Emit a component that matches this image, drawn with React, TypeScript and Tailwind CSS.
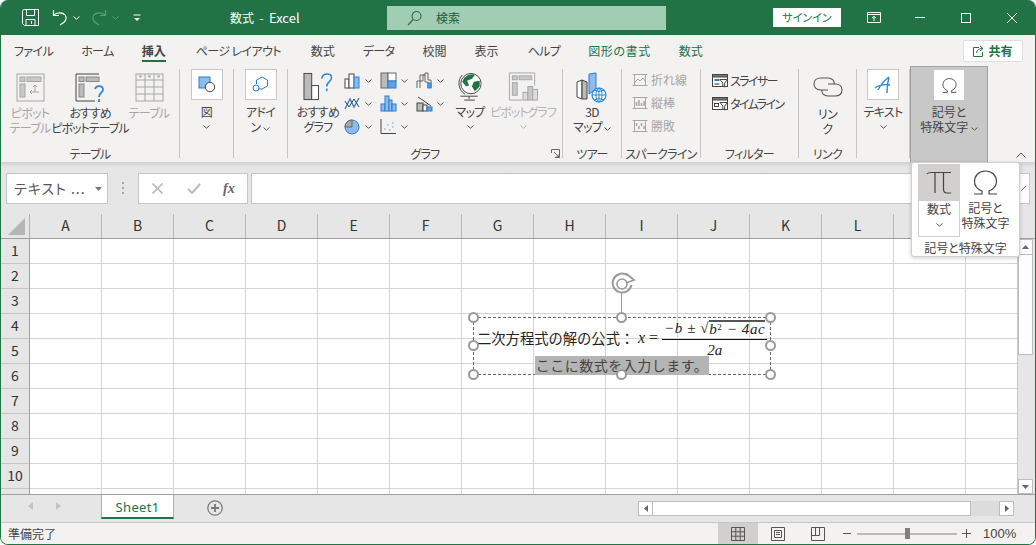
import type { ReactNode } from "react";

const columns = ["A", "B", "C", "D", "E", "F", "G", "H", "I", "J", "K", "L", "", " "];
const rows = [1, 2, 3, 4, 5, 6, 7, 8, 9, 10, 11];
const tabs = ["ファイル", "ホーム", "挿入", "ページ レイアウト", "数式", "データ", "校閲", "表示", "ヘルプ", "図形の書式", "数式"];

function Chevron({ color = "#555", className = "" }: { color?: string; className?: string }) {
  return (
    <svg width="7" height="4" viewBox="0 0 7 4" className={`inline-block ${className}`}>
      <path d="M0.5 0.5 L3.5 3.2 L6.5 0.5" fill="none" stroke={color} strokeWidth="1" />
    </svg>
  );
}

function Group({ className, label, children }: { className: string; label?: string; children: ReactNode }) {
  return (
    <div className={`relative flex h-[89px] shrink-0 flex-col border-r border-[#c4c4c4] ${className}`}>
      <div className="flex h-[77px] shrink-0 items-start">{children}</div>
      <div className="shrink-0 whitespace-nowrap text-center text-[12px] leading-[16px] text-[#444]">{label}</div>
    </div>
  );
}

function IconBox({ children }: { children: ReactNode }) {
  return (
    <div className="flex h-[31px] w-[32px] items-center justify-center border border-[#c8c8c8] bg-white">{children}</div>
  );
}

function MiniChart({ children }: { children: ReactNode }) {
  return (
    <div className="flex h-[23px] w-[36px] items-center gap-[4px]">
      <svg width="17" height="17" viewBox="0 0 17 17">{children}</svg>
      <Chevron />
    </div>
  );
}

function SparkRow({ label, children }: { label: string; children: ReactNode }) {
  return (
    <div className="flex h-[23px] items-center gap-[3px] whitespace-nowrap text-[12px] tracking-normal text-[#a6a6a6]">
      <svg width="16" height="14" viewBox="0 0 16 14" stroke="#a6a6a6" fill="none">
        <path d="M0.5 1.5H15.5M0.5 12.5H15.5M2.5 1.5V12.5M13.5 1.5V12.5" />
        {children}
      </svg>
      {label}
    </div>
  );
}

function FilterRow({ label, children }: { label: string; children: ReactNode }) {
  return (
    <div className="flex h-[23px] items-center gap-[2px] whitespace-nowrap text-[12px] tracking-[-1.6px] text-[#444]">
      <svg width="16" height="14" viewBox="0 0 16 14" fill="none">
        <rect x="0.5" y="0.5" width="15" height="12" stroke="#444" fill="#fff" />
        <rect x="0.5" y="0.5" width="15" height="2.5" fill="#777" stroke="#444" />
        {children}
        <path d="M8 5.5H15.5L12.7 9V13L10.8 12V9Z" fill="#fff" stroke="#444" />
      </svg>
      {label}
    </div>
  );
}

function Handle({ className }: { className: string }) {
  return <div className={`absolute h-[11px] w-[11px] rounded-full border-[2px] border-[#999] bg-white ${className}`} />;
}

function Omega({ size, stroke }: { size: number; stroke: number }) {
  return (
    <svg width={size} height={size} viewBox="0 0 25 25" fill="none" stroke="#444" strokeWidth={stroke}>
      <path d="M1 24H9V21C4 19 1.5 15 1.5 11.5C1.5 5.5 6 1 12.5 1C19 1 23.5 5.5 23.5 11.5C23.5 15 21 19 16 21V24H24" />
    </svg>
  );
}

export default function App() {
  return (
    <div className="relative h-[545px] w-[1036px] overflow-hidden rounded-[8px] border-x border-b border-[#217346] bg-white font-['Noto_Sans_CJK_JP',sans-serif] [font-feature-settings:'palt'] text-[#444]">
      {/* TITLE BAR */}
      <div className="flex h-[35px] items-center bg-[#217346] pl-[21px] text-white">
        <svg width="17" height="17" viewBox="0 0 17 17" fill="none" stroke="#fff">
          <path d="M0.5 2.5 Q0.5 0.5 2.5 0.5H16.5V16.5H2.5L0.5 14.5Z" />
          <path d="M4.5 0.5V6.5H12.5V0.5M4 16.5V10.5H13V16.5M9.5 12V15" />
        </svg>
        <svg width="16" height="17" viewBox="0 0 16 17" fill="none" stroke="#fff" strokeWidth="1.2" className="ml-[13px]">
          <path d="M1.5 1V6.5H7M1.8 6.2C5 3 11 3 13.5 6.5C15.5 10 13 13.5 8 16" />
        </svg>
        <Chevron color="#fff" className="ml-[5px]" />
        <svg width="16" height="17" viewBox="0 0 16 17" fill="none" stroke="#5d9d7c" strokeWidth="1.2" className="ml-[11px]">
          <path d="M14.5 1V6.5H9M14.2 6.2C11 3 5 3 2.5 6.5C0.5 10 3 13.5 8 16" />
        </svg>
        <Chevron color="#5d9d7c" className="ml-[5px]" />
        <svg width="8" height="8" viewBox="0 0 8 8" className="ml-[14px]">
          <path d="M0.5 1H7.5" stroke="#fff" />
          <path d="M1 4H7L4 7Z" fill="#fff" />
        </svg>
        <div className="ml-[89px] w-[74px] whitespace-nowrap text-[12px]">数式&nbsp; -&nbsp; <span className="text-[13px]">Excel</span></div>
        <div className="ml-[83px] flex h-[24px] w-[279px] items-center bg-[#a0cdb4] pl-[20px] text-[12px] text-[#1f5c3a]">
          <svg width="16" height="16" viewBox="0 0 16 16" fill="none" stroke="#2a6a48" strokeWidth="1.1">
            <circle cx="9.5" cy="6" r="4.5" />
            <path d="M6.2 9.5L1 15" />
          </svg>
          <span className="ml-[13px]">検索</span>
        </div>
        <div className="ml-[107px] flex h-[19px] w-[68px] items-center justify-center bg-white text-[11px] text-[#217346]">サインイン</div>
        <svg width="14" height="11" viewBox="0 0 14 11" fill="none" stroke="#fff" className="ml-[26px]">
          <path d="M0.5 0.5H13.5V10.5H0.5ZM0.5 2.5H13.5M7 9V4.5M5 6L7 4.5L9 6" />
        </svg>
        <div className="ml-[34px] h-px w-[10px] bg-white" />
        <div className="ml-[36px] h-[10px] w-[10px] border border-white" />
        <svg width="10" height="10" viewBox="0 0 10 10" stroke="#fff" className="ml-[36px]">
          <path d="M0 0L10 10M10 0L0 10" />
        </svg>
      </div>

      {/* TABS */}
      <div className="flex h-[31px] items-center gap-[28px] bg-[#f3f2f1] pl-[13px] text-[12px]">
        {tabs.map((t, i) => (
          <div
            key={i}
            className={`relative whitespace-nowrap leading-[31px] ${i === 2 ? "font-bold text-[#444]" : ""} ${i >= 9 ? "text-[#217346]" : ""} ${i === 3 ? "ml-[2px] w-[87px] tracking-[-0.6px]" : ""} ${i === 0 || i === 1 || i === 5 ? "tracking-[-0.6px]" : ""} ${i === 8 ? "ml-[1px] tracking-[-0.6px]" : ""} ${i === 9 ? "tracking-[0.6px]" : ""}`}
          >
            {t}
            {i === 2 && <div className="absolute bottom-[4px] left-0 right-0 h-[2px] bg-[#217346]" />}
          </div>
        ))}
        <div className="ml-auto mr-[12px] flex h-[22px] w-[60px] items-center justify-center gap-[4px] rounded-[2px] border border-[#e1dfdd] bg-white text-[12px] font-bold text-[#217346]">
          <svg width="11" height="12" viewBox="0 0 11 12" fill="none" stroke="#217346">
            <path d="M6 2.5H0.5V11.5H9.5V7M3.5 8C4 5 6 3.5 9 3.5M7 1L10 3.5L7 6" />
          </svg>
          共有
        </div>
      </div>

      {/* RIBBON */}
      <div className="relative flex h-[96px] items-start bg-[#f3f2f1] pt-[3px] text-center text-[12px] leading-[15px] tracking-[-0.7px]">
        <Group className="w-[179px]" label="テーブル">
          <div className="flex w-[58px] shrink-0 flex-col items-center text-[#a6a6a6]">
            <svg width="29" height="29" viewBox="0 0 29 29" fill="none" stroke="#a6a6a6" className="mt-[4px]">
              <rect x="1" y="1" width="27" height="27" />
              <rect x="4" y="4" width="5" height="4.5" fill="#c8c8c8" />
              <rect x="11" y="4" width="14" height="4.5" fill="#c8c8c8" />
              <rect x="4" y="11" width="5" height="13" fill="#c8c8c8" />
              <path d="M19 19V12M17 14L19 12L21 14M23 19H14M16 17L14 19L16 21" />
            </svg>
            <div className="mt-[3px]">ピボット<br />テーブル</div>
          </div>
          <div className="flex w-[62px] shrink-0 flex-col items-center">
            <svg width="30" height="30" viewBox="0 0 30 30" fill="none" stroke="#444" className="mt-[4px]">
              <path d="M24 1H1V28H20" />
              <rect x="4" y="4" width="5" height="4.5" fill="#bbb" stroke="#888" />
              <rect x="11" y="4" width="13" height="4.5" fill="#bbb" stroke="#888" />
              <rect x="4" y="11" width="5" height="13" fill="#bbb" stroke="#888" />
              <path d="M20 16C21 12 28 12 28 16.5C28 20 24 19.5 24 24M24 26V29" stroke="#2b88d8" strokeWidth="1.8" />
            </svg>
            <div className="mt-[2px] whitespace-nowrap tracking-[-1px]">おすすめ<br />ピボットテーブル</div>
          </div>
          <div className="flex w-[56px] shrink-0 flex-col items-center text-[#a6a6a6]">
            <svg width="29" height="29" viewBox="0 0 29 29" fill="none" stroke="#a6a6a6" className="mt-[4px]">
              <rect x="1" y="1" width="27" height="27" />
              <path d="M1 7H28M1 14H28M1 21H28M10 1V28M19 1V28" />
              <path d="M3.5 2.5H7.5L5.5 5ZM12.5 2.5H16.5L14.5 5ZM21.5 2.5H25.5L23.5 5Z" fill="#a6a6a6" stroke="none" />
            </svg>
            <div className="mt-[3px]">テーブル</div>
          </div>
        </Group>

        <Group className="w-[54px]">
          <div className="flex w-full flex-col items-center">
            <IconBox>
              <svg width="18" height="17" viewBox="0 0 18 17">
                <rect x="1" y="1" width="11" height="11" fill="#8cbcea" stroke="#2b7cd3" />
                <circle cx="12" cy="11" r="4.7" fill="#fff" stroke="#444" />
              </svg>
            </IconBox>
            <div className="mt-[4px]">図</div>
            <Chevron className="mt-[6px]" />
          </div>
        </Group>

        <Group className="w-[54px]">
          <div className="flex w-full flex-col items-center">
            <IconBox>
              <svg width="18" height="17" viewBox="0 0 18 17" fill="none" stroke="#2b7cd3">
                <path d="M10 1L15.5 4V10L10 13H7M4.5 8V4L10 1" />
                <circle cx="4" cy="12" r="3" />
              </svg>
            </IconBox>
            <div className="mt-[4px]">アドイ<br />ン <Chevron className="ml-[1px]" /></div>
          </div>
        </Group>

        <Group className="w-[275px]" label="グラフ">
          <div className="flex w-[56px] shrink-0 flex-col items-center pl-[4px]">
            <svg width="32" height="30" viewBox="0 0 32 31" fill="none" className="mt-[3px]">
              <rect x="1.5" y="1.5" width="8" height="27" fill="#bbb" stroke="#444" />
              <rect x="9.5" y="14" width="7" height="14.5" fill="#fff" stroke="#444" />
              <path d="M20 7C20 1 30 0 30 6C30 10 25 10 25 15M25 17V20" stroke="#2b88d8" strokeWidth="1.6" />
            </svg>
            <div className="mt-[2px] whitespace-nowrap">おすすめ<br />グラフ</div>
          </div>
          <div className="grid w-[108px] shrink-0 grid-cols-3">
            <MiniChart>
              <rect x="1" y="7" width="4" height="9" fill="#fff" stroke="#444" />
              <rect x="5" y="2" width="5" height="14" fill="#fff" stroke="#444" />
              <rect x="10" y="5" width="5" height="11" fill="#8cbcea" stroke="#2b7cd3" />
            </MiniChart>
            <MiniChart>
              <rect x="1" y="1" width="7" height="15" fill="#bbb" stroke="#666" />
              <rect x="8" y="1" width="8" height="8" fill="#fff" stroke="#666" />
              <rect x="8" y="9" width="8" height="7" fill="#5ea3e4" stroke="#2b7cd3" />
            </MiniChart>
            <MiniChart>
              <path d="M1 16V9H4V3H9V1H12V8H15V16" fill="none" stroke="#666" />
              <path d="M4 16V9H7V3H9V10H12V16" fill="none" stroke="#666" />
              <rect x="12" y="11" width="3" height="5" fill="#5ea3e4" stroke="#2b7cd3" />
            </MiniChart>
            <MiniChart>
              <path d="M1 14L6 4L10 12L15 3" fill="none" stroke="#2b7cd3" strokeWidth="1.3" />
              <path d="M1 6L5 12L10 4L15 12" fill="none" stroke="#444" />
            </MiniChart>
            <MiniChart>
              <rect x="1" y="9" width="4" height="7" fill="#8cbcea" stroke="#2b7cd3" />
              <rect x="5" y="1" width="4" height="15" fill="#8cbcea" stroke="#2b7cd3" />
              <rect x="9" y="5" width="3" height="11" fill="#8cbcea" stroke="#2b7cd3" />
              <rect x="12" y="9" width="4" height="7" fill="#8cbcea" stroke="#2b7cd3" />
            </MiniChart>
            <MiniChart>
              <path d="M2 2L8 6L15 11" stroke="#444" fill="none" />
              <rect x="1" y="8" width="6" height="8" fill="#bbb" stroke="#444" />
              <rect x="7" y="10" width="4" height="6" fill="#fff" stroke="#444" />
              <rect x="11" y="12" width="5" height="4" fill="#5ea3e4" stroke="#2b7cd3" />
            </MiniChart>
            <MiniChart>
              <circle cx="8" cy="9" r="7" fill="#8cbcea" stroke="#2b7cd3" />
              <path d="M8 9V2A7 7 0 0 0 1 9Z" fill="#aaa" stroke="#666" />
            </MiniChart>
            <MiniChart>
              <path d="M1 1V15.5H16" fill="none" stroke="#444" />
              <path d="M4 11H5.5M7 7H8.5M9 12H10.5M12 5H13.5M12 9H13.5" stroke="#5ea3e4" />
            </MiniChart>
          </div>
          <div className="flex w-[36px] shrink-0 flex-col items-center">
            <svg width="26" height="30" viewBox="0 0 26 31" fill="none" className="mt-[3px]">
              <circle cx="14" cy="12" r="10.5" fill="#fff" stroke="#444" />
              <path d="M7 6Q13 1 18 3L15 7L10 9L12 14L9 15L5 10ZM17 10L23 9L23 15L18 20L15 15Z" fill="#217346" />
              <path d="M5 3A13 13 0 0 0 8 23M3 25H21M12 25V28M7 29H18" stroke="#444" />
            </svg>
            <div className="mt-[2px] whitespace-nowrap">マップ</div>
            <Chevron className="mt-[6px]" />
          </div>
          <div className="flex w-[70px] shrink-0 flex-col items-center text-[#b4b4b4]">
            <svg width="31" height="30" viewBox="0 0 31 31" fill="none" stroke="#a6a6a6" className="mt-[3px]">
              <path d="M27 14V1H1V29H14" />
              <rect x="4" y="4" width="5" height="4" fill="#c8c8c8" />
              <rect x="11" y="4" width="13" height="4" fill="#c8c8c8" />
              <rect x="4" y="11" width="5" height="13" fill="#c8c8c8" />
              <rect x="15" y="21" width="5" height="8" fill="#ddd" />
              <rect x="20" y="15" width="5" height="14" fill="#c8c8c8" />
              <rect x="25" y="18" width="5" height="11" fill="#ddd" />
            </svg>
            <div className="mt-[2px] whitespace-nowrap tracking-[-1px]">ピボットグラフ</div>
            <Chevron color="#b4b4b4" className="mt-[6px]" />
          </div>
          <svg width="9" height="9" viewBox="0 0 9 9" fill="none" stroke="#666" className="absolute bottom-0 right-[2px]">
            <path d="M0.5 4V0.5H8.5V8.5H4M3 3L8 8M5 8H8V5" />
          </svg>
        </Group>

        <Group className="w-[59px]" label="ツアー">
          <div className="flex w-full flex-col items-center">
            <svg width="32" height="31" viewBox="0 0 32 31" className="mt-[3px]">
              <path d="M1 10L6 8V27L1 25Z" fill="#fff" stroke="#444" />
              <path d="M6 8L11 10V27H6Z" fill="#bbb" stroke="#444" />
              <path d="M13 2L20 1V17L13 22Z" fill="#8cbcea" stroke="#2b7cd3" />
              <circle cx="23" cy="23" r="7" fill="#fff" stroke="#2b88d8" strokeWidth="1.2" />
              <path d="M16 23H30M23 16V30M18 18Q23 21 28 18M18 28Q23 25 28 28" fill="none" stroke="#2b88d8" />
              <ellipse cx="23" cy="23" rx="3" ry="7" fill="none" stroke="#2b88d8" />
            </svg>
            <div className="mt-[1px] whitespace-nowrap">3D<br />マップ <Chevron /></div>
          </div>
        </Group>

        <Group className="w-[79px]" label="スパークライン">
          <div className="flex flex-col items-start pl-[10px] mt-[-1px]">
            <SparkRow label="折れ線"><path d="M3 9L6 6L8 8L11 5L13 8" /></SparkRow>
            <SparkRow label="縦棒"><path d="M4.5 10V6M7 10V4M9.5 10V7M12 10V5" strokeWidth="1.5" /></SparkRow>
            <SparkRow label="勝敗"><path d="M4.5 7V4M7 10V7M9.5 7V4M12 10V7" strokeWidth="1.5" /></SparkRow>
          </div>
        </Group>

        <Group className="w-[98px]" label="フィルター">
          <div className="flex flex-col items-start pl-[11px]">
            <FilterRow label="スライサー">
              <rect x="2.5" y="5" width="5" height="2" fill="#2b7cd3" />
              <rect x="2.5" y="9" width="5" height="2" fill="#999" />
            </FilterRow>
            <FilterRow label="タイムライン">
              <rect x="2.5" y="6.5" width="4" height="3" fill="#fff" stroke="#444" />
            </FilterRow>
          </div>
        </Group>

        <Group className="w-[58px]" label="リンク">
          <div className="flex w-full flex-col items-center">
            <svg width="30" height="26" viewBox="0 0 30 26" fill="none" stroke="#555" strokeWidth="1.1" className="mt-[5px]">
              <path d="M15 16H8C3 16 1 13 1 10C1 6 4 4 8 4H15C19 4 22 7 21 10" />
              <path d="M15 10H22C27 10 29 13 29 16C29 20 26 22 22 22H15C11 22 8 19 9 16" />
            </svg>
            <div className="mt-[6px]">リン<br />ク</div>
          </div>
        </Group>

        <Group className="w-[53px]">
          <div className="flex w-full flex-col items-center">
            <IconBox>
              <svg width="18" height="18" viewBox="0 0 18 18" fill="none" stroke="#2b88d8" strokeWidth="1.4">
                <path d="M1 12C5 9 10 8 16 9M15 1Q8 6 4 14M15 1Q13 8 13 17" />
              </svg>
            </IconBox>
            <div className="mt-[4px] whitespace-nowrap">テキスト</div>
            <Chevron className="mt-[6px]" />
          </div>
        </Group>

        <div className="mt-[-3px] flex h-[96px] w-[78px] shrink-0 flex-col items-center border-x border-t border-[#a3a3a3] bg-[#c8c8c8] pt-[3px] tracking-normal">
          <div className="flex h-[30px] w-[30px] items-center justify-center bg-white"><Omega size={15} stroke={1.5} /></div>
          <div className="mt-[4px] whitespace-nowrap">記号と<br />特殊文字 <Chevron /></div>
        </div>

        <svg width="10" height="6" viewBox="0 0 10 6" className="absolute bottom-[4px] right-[9px]">
          <path d="M0.5 5.5L5 1L9.5 5.5" fill="none" stroke="#555" />
        </svg>
      </div>

      {/* FORMULA BAR */}
      <div className="flex h-[52px] items-start bg-[#e6e6e6] bg-gradient-to-b from-[#d0d0d0] from-0% to-[#e6e6e6] to-[10%] pl-[5px] pt-[11px]">
        <div className="flex h-[31px] w-[102px] items-center justify-between border border-[#c6c6c6] bg-white pl-[7px] pr-[5px] text-[14px] tracking-[1px] text-[#555]">
          テキスト ...
          <svg width="7" height="4" viewBox="0 0 7 4"><path d="M0 0H7L3.5 4Z" fill="#777" /></svg>
        </div>
        <div className="ml-[14px] mt-[9px] flex h-[12px] flex-col justify-between">
          <div className="h-[2px] w-[2px] bg-[#aaa]" />
          <div className="h-[2px] w-[2px] bg-[#aaa]" />
          <div className="h-[2px] w-[2px] bg-[#aaa]" />
        </div>
        <div className="ml-[14px] flex h-[31px] w-[110px] items-center border border-[#c6c6c6] bg-white pl-[13px]">
          <svg width="11" height="11" viewBox="0 0 11 11" stroke="#bbb" strokeWidth="1.6"><path d="M0.5 0.5L10.5 10.5M10.5 0.5L0.5 10.5" /></svg>
          <svg width="14" height="11" viewBox="0 0 14 11" fill="none" stroke="#bbb" strokeWidth="2" className="ml-[24px]"><path d="M1 6L5 10L13 1" /></svg>
          <span className="ml-[22px] font-['Liberation_Serif',serif] text-[14px] font-bold italic text-[#666]">fx</span>
        </div>
        <div className="ml-[3px] flex h-[31px] w-[779px] items-center justify-end border border-[#c6c6c6] bg-white pr-[3px]">
          <svg width="5" height="5" viewBox="0 0 5 5" fill="none" stroke="#888"><path d="M0 5L5 0" /></svg>
        </div>
      </div>

      {/* COLUMN HEADERS */}
      <div className="flex h-[25px] border-b border-[#9f9f9f] bg-[#e6e6e6]">
        <div className="relative w-[29px] shrink-0 border-r border-[#b0b0b0]">
          <svg width="18" height="18" viewBox="0 0 18 18" className="absolute bottom-[2px] right-[3px]"><path d="M17 0V17H0Z" fill="#b5b5b5" /></svg>
        </div>
        <div className="flex min-w-0 flex-1 overflow-hidden">
          {columns.map((c) => (
            <div key={c} className="w-[72px] shrink-0 border-r border-[#b8b8b8] text-center text-[14px] leading-[23px] text-[#333]">{c}</div>
          ))}
        </div>
      </div>

      {/* SHEET */}
      <div className="flex h-[255px]">
        <div className="w-[29px] shrink-0 overflow-hidden border-r border-[#9f9f9f] bg-[#e6e6e6]">
          {rows.map((r) => (
            <div key={r} className="h-[25px] border-b border-[#c6c6c6] text-center text-[14px] leading-[23px] text-[#333]">{r <= 10 ? r : ""}</div>
          ))}
        </div>
        <div className="min-w-0 flex-1 overflow-hidden border-r border-[#c6c6c6]">
          {rows.map((r) => (
            <div key={r} className="flex h-[25px]">
              {columns.map((c) => (
                <div key={c} className="h-[25px] w-[72px] shrink-0 border-b border-r border-[#d4d4d4]" />
              ))}
            </div>
          ))}
        </div>
        <div className="flex w-[17px] shrink-0 flex-col items-center bg-[#e6e6e6] pr-[2px]">
          <div className="flex h-[16px] w-[15px] items-center justify-center border border-[#bdbdbd] bg-white">
            <svg width="7" height="4" viewBox="0 0 7 4"><path d="M0 4H7L3.5 0Z" fill="#666" /></svg>
          </div>
          <div className="h-[100px] w-[15px] border-x border-b border-[#bdbdbd] bg-white" />
          <div className="mt-auto flex h-[15px] w-[15px] items-center justify-center border border-[#bdbdbd] bg-white">
            <svg width="7" height="4" viewBox="0 0 7 4"><path d="M0 0H7L3.5 4Z" fill="#666" /></svg>
          </div>
        </div>
      </div>

      {/* SHEET TABS */}
      <div className="flex h-[28px] border-t border-[#9f9f9f] bg-[#e6e6e6]">
        <div className="flex w-[100px] shrink-0 items-center gap-[23px] pb-[6px] pl-[27px]">
          <svg width="5" height="8" viewBox="0 0 5 8"><path d="M5 0V8L0 4Z" fill="#c4c4c4" /></svg>
          <svg width="5" height="8" viewBox="0 0 5 8"><path d="M0 0V8L5 4Z" fill="#c4c4c4" /></svg>
        </div>
        <div className="h-[24px] w-[73px] shrink-0 border-x border-b-[2px] border-x-[#b0b0b0] border-b-[#217346] bg-white text-center font-['Noto_Sans',sans-serif] text-[13px] leading-[24px] tracking-[0.3px] text-[#217346]">Sheet1</div>
        <svg width="16" height="16" viewBox="0 0 16 16" fill="none" stroke="#777" className="ml-[33px] mt-[5px]">
          <circle cx="8" cy="8" r="7.2" strokeWidth="1.2" />
          <path d="M4 8H12M8 4V12" strokeWidth="1.8" />
        </svg>
        <div className="ml-[415px] mt-[6px] flex h-[15px] w-[376px] items-stretch">
          <div className="flex w-[15px] items-center justify-center border border-[#bdbdbd] bg-white">
            <svg width="4" height="7" viewBox="0 0 4 7"><path d="M4 0V7L0 3.5Z" fill="#666" /></svg>
          </div>
          <div className="w-[318px] border-y border-r border-[#bdbdbd] bg-white" />
          <div className="flex-1 bg-[#dcdcdc]" />
          <div className="flex w-[15px] items-center justify-center border border-[#bdbdbd] bg-white">
            <svg width="4" height="7" viewBox="0 0 4 7"><path d="M0 0V7L4 3.5Z" fill="#666" /></svg>
          </div>
        </div>
      </div>

      {/* STATUS BAR */}
      <div className="flex h-[22px] items-center border-t border-[#c6c6c6] bg-[#f3f2f1] pl-[7px] text-[12px] text-[#444]">
        <span>準備完了</span>
        <div className="ml-[662px] flex h-full w-[40px] items-center justify-center bg-[#d2d0ce]">
          <svg width="14" height="14" viewBox="0 0 14 14" fill="none" stroke="#555"><path d="M0.5 0.5H13.5V13.5H0.5ZM0.5 4.8H13.5M0.5 9.2H13.5M4.8 0.5V13.5M9.2 0.5V13.5" /></svg>
        </div>
        <div className="flex w-[40px] items-center justify-center">
          <svg width="14" height="14" viewBox="0 0 14 14" fill="none" stroke="#555"><path d="M0.5 0.5H13.5V13.5H0.5ZM3.5 3.5H10.5V10.5H3.5ZM5 5.5H9M5 7.5H9" /></svg>
        </div>
        <div className="flex w-[40px] items-center justify-center">
          <svg width="14" height="14" viewBox="0 0 14 14" fill="none" stroke="#555"><path d="M0.5 0.5H13.5V13.5H0.5ZM0.5 8.5H8.5V0.5M4.5 0.5V8.5" /></svg>
        </div>
        <div className="ml-[5px] h-px w-[8px] bg-[#555]" />
        <div className="ml-[6px] flex h-[2px] w-[100px] items-center justify-center bg-[#bbb]">
          <div className="h-[11px] w-[5px] bg-[#808080]" />
        </div>
        <svg width="9" height="9" viewBox="0 0 9 9" stroke="#555" className="ml-[5px]"><path d="M0 4.5H9M4.5 0V9" /></svg>
        <span className="ml-[12px] font-['Liberation_Sans',sans-serif] text-[13px]">100%</span>
      </div>

      {/* EQUATION SHAPE */}
      <div className="absolute left-[472px] top-[317px] h-[58px] w-[298px] border border-dashed border-[#666] text-[14px] text-[#222]">
        <div className="absolute left-[3px] top-[4px] flex h-[32px] items-center whitespace-nowrap [font-feature-settings:normal]">
          <span className="w-[161px] text-[14.3px]">二次方程式の解の公式：</span>
          <span className="font-['Liberation_Serif',serif] text-[16px] italic">x</span>
          <span className="ml-[4px] font-['Liberation_Serif',serif] text-[16px]">=</span>
          <div className="ml-[4px] mt-[4px] flex w-[105px] flex-col items-center font-['Liberation_Serif',serif] text-[15px] italic leading-[17px]">
            <div className="flex h-[20px] w-full justify-center whitespace-nowrap border-b border-[#111] tracking-[0.6px]">
              <span>−b ± √</span>
              <span className="h-[15px] border-t-[2px] border-[#555] leading-[15px]">b<sup className="text-[9px] not-italic">2</sup> − 4ac</span>
            </div>
            <span className="leading-[20px]">2a</span>
          </div>
        </div>
        <div className="absolute left-[61px] top-[38px] h-[19px] w-[174px] bg-[#b4b4b4] text-center text-[14px] leading-[19px] tracking-[0.5px] text-[#444] [font-feature-settings:normal]">ここに数式を入力します。</div>
      </div>
      <div className="absolute left-[620px] top-[292px] h-[25px] w-px bg-[#999]" />
      <svg width="26" height="24" viewBox="0 0 26 24" fill="none" stroke="#999" strokeWidth="2" className="absolute left-[610px] top-[272px]">
        <path d="M20.5 13A9.5 9.5 0 1 1 17 3.5" />
        <circle cx="11" cy="12" r="5" strokeWidth="1.6" />
        <path d="M15 1.5L23 8L15 11" strokeWidth="1.8" />
      </svg>
      <Handle className="left-[467px] top-[312px]" />
      <Handle className="left-[615px] top-[312px]" />
      <Handle className="left-[764px] top-[312px]" />
      <Handle className="left-[467px] top-[340px]" />
      <Handle className="left-[764px] top-[340px]" />
      <Handle className="left-[467px] top-[369px]" />
      <Handle className="left-[615px] top-[369px]" />
      <Handle className="left-[764px] top-[369px]" />

      {/* FLYOUT */}
      <div className="absolute left-[910px] top-[162px] h-[95px] w-[109px] rounded-[3px] border border-[#d2d0ce] bg-white text-center text-[12px] leading-[15px] shadow-[0_1px_4px_rgba(0,0,0,0.2)]">
        <div className="flex h-[73px] pl-[6px] pt-px">
          <div className="flex h-[73px] w-[42px] flex-col items-center border border-[#d2d0ce]">
            <div className="flex h-[36px] w-full items-center justify-center bg-[#d2d0ce]">
              <svg width="26" height="24" viewBox="0 0 26 24" fill="none" stroke="#444" strokeWidth="1.2">
                <path d="M1 3Q2 1.5 5 1.5H25M9 1.5V22M17.5 1.5V18Q17.5 22 21 22H25" />
              </svg>
            </div>
            <div className="mt-0">数式</div>
            <Chevron className="mt-[7px]" />
          </div>
          <div className="flex w-[51px] flex-col items-center">
            <div className="flex h-[36px] items-center"><Omega size={25} stroke={1.2} /></div>
            <div className="whitespace-nowrap">記号と<br />特殊文字</div>
          </div>
        </div>
        <div className="mt-[4px] whitespace-nowrap leading-[16px]">記号と特殊文字</div>
      </div>
    </div>
  );
}
